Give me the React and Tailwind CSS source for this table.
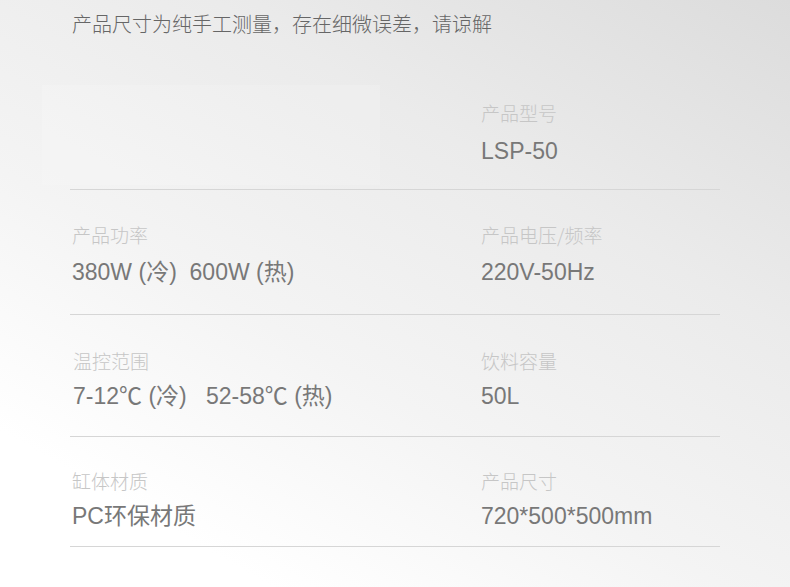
import React from 'react'

const valueFont = 'font-["Liberation_Sans","Noto_Sans_CJK_SC",sans-serif]'
const labelFont = 'font-["Noto_Sans_CJK_SC","Noto_Sans",sans-serif]'

const rows = [
  {
    cls: 'pt-[63px] pb-[24px]',
    gap: 'mt-[12px]',
    left: null,
    right: { label: '产品型号', value: 'LSP-50' },
  },
  {
    cls: 'pt-[33px] pb-[28px]',
    gap: 'mt-[11px]',
    left: { label: '产品功率', value: '380W (冷)  600W (热)' },
    right: { label: '产品电压/频率', value: '220V-50Hz' },
  },
  {
    cls: 'pt-[34px] pb-[26px]',
    gap: 'mt-[9px]',
    left: { label: '温控范围', value: '7-12℃ (冷)   52-58℃ (热)', indent: true },
    right: { label: '饮料容量', value: '50L' },
  },
  {
    cls: 'pt-[32px] pb-[16px]',
    gap: 'mt-[9px]',
    left: { label: '缸体材质', value: 'PC环保材质' },
    right: { label: '产品尺寸', value: '720*500*500mm' },
  },
]

function Cell({ item, gap }) {
  return (
    <div className={item.indent ? 'pl-[1px]' : ''}>
      <div className={`${labelFont} font-light text-[19px] leading-[24px] text-[#c6c6c6]`}>{item.label}</div>
      <div className={`${valueFont} ${gap} text-[23px] leading-[28px] text-[#787878] whitespace-pre`}>{item.value}</div>
    </div>
  )
}

export default function App() {
  return (
    <div className="w-[790px] h-[587px] overflow-hidden bg-[linear-gradient(210deg,#dcdcdc_0%,#ebebeb_32%,#f4f4f4_60%,#ffffff_85%)]">
      <div className={`${labelFont} font-light pl-[72px] pt-[10px] text-[20px] leading-[28px] text-[#666666]`}>
        产品尺寸为纯手工测量，存在细微误差，请谅解
      </div>
      <div className="ml-[70px] w-[650px]">
        {rows.map((r, i) => (
          <div key={i} className={`grid grid-cols-[409px_1fr] pl-[2px] border-b border-[#d6d6d6] ${r.cls}`}>
            {r.left ? (
              <Cell item={r.left} gap={r.gap} />
            ) : (
              <div className="relative">
                <div className="absolute left-[-30px] top-[-16px] w-[338px] h-[100px] bg-white/15" />
              </div>
            )}
            <Cell item={r.right} gap={r.gap} />
          </div>
        ))}
      </div>
    </div>
  )
}
